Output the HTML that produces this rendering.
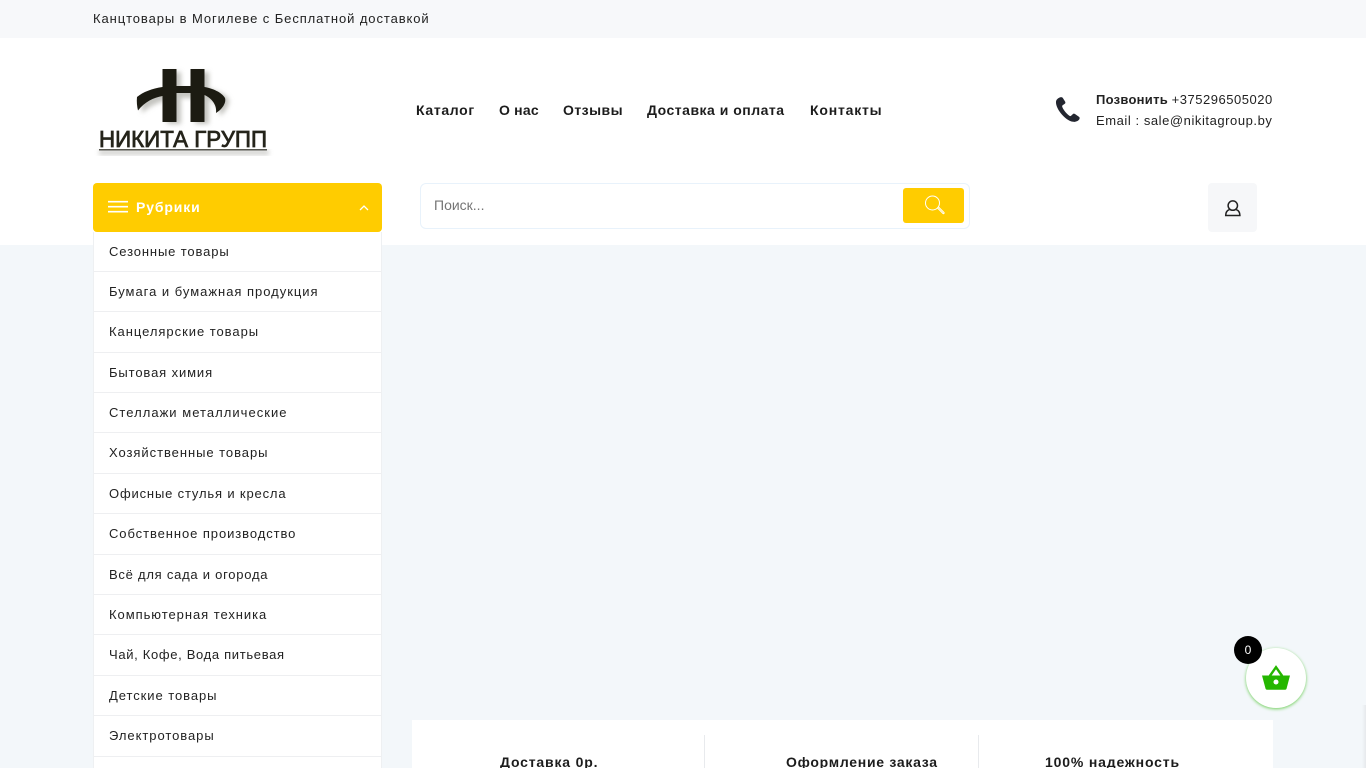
<!DOCTYPE html>
<html lang="ru">
<head>
<meta charset="utf-8">
<title>Никита Групп</title>
<style>
*{box-sizing:border-box}
html{margin:0;padding:0;width:1366px;height:768px;overflow:hidden}
body{margin:0;padding:0;width:1366px;height:768px;overflow:hidden;position:relative;background:#f3f7fa;font-family:"Liberation Sans",Arial,sans-serif;color:#1c1c1c}
.a{position:absolute;white-space:nowrap}
#top{left:0;top:0;width:1366px;height:38px;background:#f7f8fa}
#hdr{left:0;top:38px;width:1366px;height:207px;background:#fff}
.nav{top:102px;font-size:14px;line-height:16px;font-weight:700;color:#1c1c1c}
#rub{left:93px;top:183px;width:289px;height:49px;background:#ffcc00;border-radius:4px}
#menu{left:93px;top:232px;width:289px;height:536px;background:#fff;border:1px solid #eef0f2;border-top:0;border-bottom:0;overflow:hidden}
.m{position:absolute;left:0;width:287px;border-bottom:1px solid #eeeff1;font-size:13px;line-height:16px;color:#222;white-space:nowrap}
.m span{position:absolute;top:12px;left:15px}
#search{left:420px;top:183px;width:550px;height:46px;background:#fff;border:1px solid #e8f2fb;border-radius:6px}
#sb{left:903px;top:188px;width:61px;height:35px;background:#ffcc00;border-radius:3px}
#user{left:1208px;top:183px;width:49px;height:49px;background:#f6f7f9;border-radius:4px}
#feat{left:412px;top:720px;width:861px;height:48px;background:#fff}
.ft{top:755px;font-size:14px;line-height:14px;height:13px;overflow:visible;font-weight:700;color:#1c1c1c}
.sep{top:735px;width:1px;height:33px;background:#e8eaed}
#cart{left:1246px;top:648px;width:60px;height:60px;border-radius:50%;background:#fff;box-shadow:0 1px 3px #6fcf5a}
#cnt{left:1234px;top:636px;width:28px;height:28px;border-radius:50%;background:#000;color:#fff;font-size:12px;line-height:28px;text-align:center}
</style>
</head>
<body>
<div class="a" id="top"></div>
<div class="a" style="left:93px;top:11px;font-size:13px;line-height:16px;letter-spacing:.91px;color:#222">Канцтовары в Могилеве с Бесплатной доставкой</div>
<div class="a" id="hdr"></div>

<svg class="a" style="left:93px;top:60px" width="190" height="100" viewBox="93 60 190 100">
<defs><filter id="bl" x="-20%" y="-20%" width="140%" height="140%"><feGaussianBlur stdDeviation="2.500"/></filter></defs>
<g fill="#c4c4c0" filter="url(#bl)" transform="translate(4 3)">
<path d="M163 69h14v52h-14zM191 69h14v52h-14z"/>
<path d="M137 97C146 91 160 87 176 86H205C216 88 227 94 225 100C223 106 220 110 216 113C216 105 211 99 204 95H176C160 96 147 102 138 110Z"/>
</g>
<path d="M162.500 69h14v17h14V69h14v18c8 1.500 17 5 20.500 11 1.500 5-3 11.500-9 15 1-7-3-14-11.500-18v27h-14V93h-14v29h-14V96c-9 1.500-18 6-24.500 14.500-1-4-1.500-9-1-13.500 6-5 15-8.500 25.500-10Z" fill="#1c1b12"/>
<rect x="99" y="150" width="170" height="5" fill="#d2d2cf" filter="url(#bl)"/>
<text x="99" y="147" font-family="Liberation Sans,sans-serif" font-weight="400" font-size="23" textLength="168" lengthAdjust="spacingAndGlyphs" fill="#25241b" stroke="#25241b" stroke-width=".8">НИКИТА ГРУПП</text>
<rect x="99" y="149" width="168" height="1.500" fill="#55554e"/>
</svg>

<div class="a nav" style="left:416px;letter-spacing:.66px">Каталог</div>
<div class="a nav" style="left:499px;letter-spacing:.2px">О нас</div>
<div class="a nav" style="left:563px;letter-spacing:.47px">Отзывы</div>
<div class="a nav" style="left:647px;letter-spacing:.5px">Доставка и оплата</div>
<div class="a nav" style="left:810px;letter-spacing:.8px">Контакты</div>

<svg class="a" style="left:1055px;top:96px" width="26" height="27" viewBox="0 0 26 27">
<path d="M5.600 1.200C3.900 1.500 1.300 3 1 5.600c-.3 3 1.500 7.500 4.800 11.600 3.600 4.500 8 7.900 12.300 8.600 2.400.4 5.300-.9 6.300-2.700.5-.9.300-1.700-.5-2.300l-3.900-2.800c-.8-.5-1.600-.5-2.300.2l-1.600 1.500c-.5.500-1.100.5-1.700.1-1.500-1-3.300-2.800-4.700-4.700-1.200-1.600-2.200-3.300-2.500-4.500-.2-.6 0-1.100.6-1.500l1.800-1.200c.8-.5 1-1.300.6-2.200L8 2.300c-.5-.9-1.400-1.300-2.400-1.100Z" fill="#232630"/>
</svg>
<div class="a" style="left:1096px;top:92px;font-size:13px;line-height:16px;color:#222"><b style="letter-spacing:.27px">Позвонить</b> <span style="letter-spacing:.52px">+375296505020</span></div>
<div class="a" style="left:1096px;top:113px;font-size:13px;line-height:16px;letter-spacing:.56px;color:#222">Email : sale@nikitagroup.by</div>

<div class="a" id="rub"></div>
<svg class="a" style="left:108px;top:200px" width="20" height="14"><path d="M0 1.700h20M0 6.700h20M0 11.700h20" stroke="#fff" stroke-width="1.700"/></svg>
<div class="a" style="left:136px;top:199px;font-size:14px;line-height:17px;font-weight:700;letter-spacing:.86px;color:#fff">Рубрики</div>
<svg class="a" style="left:359px;top:204px" width="10" height="8"><path d="M1 6l4-4 4 4" fill="none" stroke="#fff" stroke-width="1.300"/></svg>

<div class="a" id="menu">
<div class="m" style="top:0;height:40px;letter-spacing:.87px"><span>Сезонные товары</span></div>
<div class="m" style="top:40px;height:40px;letter-spacing:.98px"><span>Бумага и бумажная продукция</span></div>
<div class="m" style="top:80px;height:41px;letter-spacing:.96px"><span>Канцелярские товары</span></div>
<div class="m" style="top:121px;height:40px;letter-spacing:.88px"><span>Бытовая химия</span></div>
<div class="m" style="top:161px;height:40px;letter-spacing:1.03px"><span>Стеллажи металлические</span></div>
<div class="m" style="top:201px;height:41px;letter-spacing:.95px"><span>Хозяйственные товары</span></div>
<div class="m" style="top:242px;height:40px;letter-spacing:.84px"><span>Офисные стулья и кресла</span></div>
<div class="m" style="top:282px;height:41px;letter-spacing:.92px"><span>Собственное производство</span></div>
<div class="m" style="top:323px;height:40px;letter-spacing:.75px"><span>Всё для сада и огорода</span></div>
<div class="m" style="top:363px;height:40px;letter-spacing:.95px"><span>Компьютерная техника</span></div>
<div class="m" style="top:403px;height:41px;letter-spacing:.67px"><span>Чай, Кофе, Вода питьевая</span></div>
<div class="m" style="top:444px;height:40px;letter-spacing:.94px"><span>Детские товары</span></div>
<div class="m" style="top:484px;height:41px;letter-spacing:.95px"><span>Электротовары</span></div>
</div>

<div class="a" id="search"></div>
<div class="a" style="left:434px;top:197px;font-size:14px;line-height:16px;color:#757575">Поиск...</div>
<div class="a" id="sb"></div>
<svg class="a" style="left:924px;top:195px" width="22" height="21" viewBox="0 0 22 21">
<circle cx="8.500" cy="8" r="7" fill="none" stroke="#fff" stroke-width="1"/>
<path d="M13.500 13l5.500 5.500c.6.600 1.600-.4 1-1L14.500 12" fill="none" stroke="#fff" stroke-width="1"/>
</svg>

<div class="a" id="user"></div>
<svg class="a" style="left:1224px;top:199px" width="18" height="18" viewBox="0 0 18 18">
<circle cx="8.800" cy="6.600" r="4.700" fill="none" stroke="#222" stroke-width="1.500"/>
<path d="M5.400 10.600C3 11.500 1.700 13.800 1.700 16.500h14.200C15.900 13.800 14.600 11.500 12.200 10.600" fill="none" stroke="#222" stroke-width="1.500"/>
</svg>

<div class="a" id="feat"></div>
<div class="a sep" style="left:704px"></div>
<div class="a sep" style="left:978px"></div>
<div class="a ft" style="left:500px;letter-spacing:.82px">Доставка 0р.</div>
<div class="a ft" style="left:786px;letter-spacing:.72px">Оформление заказа</div>
<div class="a ft" style="left:1045px;letter-spacing:.83px">100% надежность</div>

<div class="a" style="left:1362px;top:705px;width:4px;height:63px;background:linear-gradient(90deg,rgba(225,228,232,0),#e6e9ec)"></div>

<div class="a" id="cart"></div>
<svg class="a" style="left:1261px;top:665px" width="30" height="26" viewBox="0 0 30 26">
<path d="M1 10.500h28l-3.400 13c-.2.800-.7 1.200-1.500 1.200H6c-.8 0-1.300-.4-1.500-1.200Z" fill="#25b700"/>
<path d="M8.800 11L15 2.200 21.200 11" fill="none" stroke="#25b700" stroke-width="2.400"/>
<circle cx="15" cy="17" r="2.500" fill="#fff"/>
</svg>
<div class="a" id="cnt">0</div>
</body>
</html>
